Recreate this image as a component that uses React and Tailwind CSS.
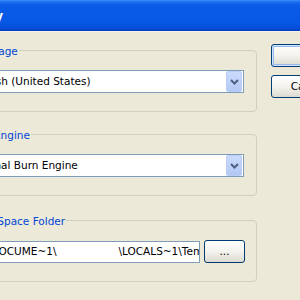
const font = { fontFamily: '"DejaVu Sans", Verdana, sans-serif' };

const Chevron = () => (
  <svg width="9" height="6" viewBox="0 0 9 6">
    <path d="M1 1 L4.5 4.5 L8 1" fill="none" stroke="#4d6185" strokeWidth="2" />
  </svg>
);

const GroupBox = ({ label, className, children }) => (
  <div className={`relative h-[62px] rounded-[4px] border border-[#d0d0bf] pt-[19px] pl-[9px] ${className}`}>
    <span className="absolute left-[2px] top-0 -translate-y-1/2 bg-[#ece9d8] px-[1px] text-[10.5px] leading-none text-[#0046d5] whitespace-nowrap">
      {label}
    </span>
    {children}
  </div>
);

// combo text sits a bit further left than the folder field
const ComboBox = ({ value }) => (
  <div className="-ml-[6px] flex h-[23px] w-[278px] items-center border border-[#7f9db9] bg-white">
    <span className="flex-1 pl-[3px] text-[10.5px] text-black whitespace-nowrap overflow-hidden">{value}</span>
    <div className="mr-[1px] flex h-[21px] w-[16px] items-center justify-center rounded-[2px] border border-[#b9cdf6] bg-gradient-to-b from-[#cbdbfc] to-[#b3c8f5]">
      <Chevron />
    </div>
  </div>
);

const XpButton = ({ children, isDefault, className }) => (
  <div
    className={`flex items-center justify-center rounded-[3px] border border-[#003c74] bg-gradient-to-b from-[#ffffff] via-[#f4f3ee] to-[#dcdad0] text-[10.5px] text-black ${
      isDefault ? 'shadow-[inset_0_0_0_1px_#cee7ff,inset_0_0_0_2px_#98b8ea]' : ''
    } ${className}`}
  >
    {children}
  </div>
);

export default function App() {
  return (
    <div className="h-[300px] w-[300px] overflow-hidden bg-[#ece9d8]" style={font}>
      <div className="flex h-[32px] items-center border-b border-[#f4f3ec] bg-[linear-gradient(to_bottom,#3d8cf7_0px,#1a6ef2_2px,#0a5be6_5px,#0758e6_22px,#0450d8_28px,#003cbe_31px)]">
        <div className="flex w-[3px] justify-end">
          <span className="whitespace-nowrap text-[12px] font-bold text-white">Property</span>
        </div>
      </div>

      <div className="flex w-max pt-[18px]">
        <div className="ml-[-38px] flex w-[295px] flex-col">
          <GroupBox label="Language">
            <ComboBox value="English (United States)" />
          </GroupBox>
          <GroupBox label="Burn Engine" className="mt-[22px]">
            <ComboBox value="Internal Burn Engine" />
          </GroupBox>
          <GroupBox label="Temp Space Folder" className="mt-[24px] h-[61px]">
            <div className="flex items-center gap-[4px]">
              <div className="flex h-[22px] w-[228px] items-center overflow-hidden border border-[#7f9db9] bg-white pl-[3px] text-[10.5px] whitespace-nowrap">
                <span>C:\DOCUME~1\</span>
                <span className="inline-block w-[62px] shrink-0" />
                <span>\LOCALS~1\Temp\</span>
              </div>
              <XpButton className="h-[23px] w-[41px]">...</XpButton>
            </div>
          </GroupBox>
        </div>

        <div className="ml-[14px] flex flex-col gap-[8px]">
          <XpButton isDefault className="-mt-[6px] h-[23px] w-[75px]">OK</XpButton>
          <XpButton className="h-[23px] w-[75px]">Cancel</XpButton>
        </div>
      </div>
    </div>
  );
}
